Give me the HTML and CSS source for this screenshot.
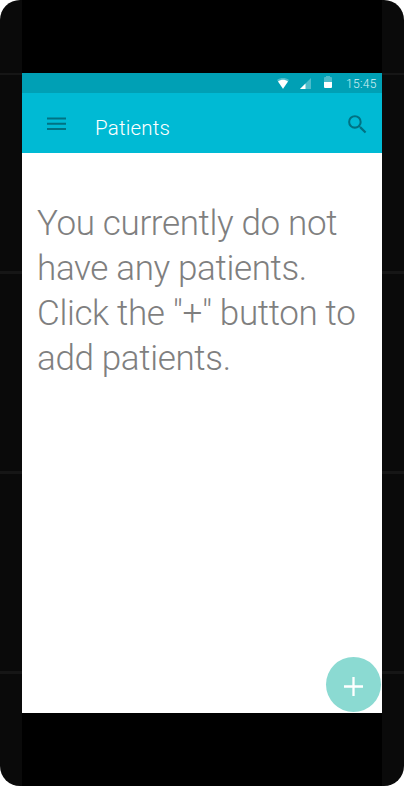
FILE: index.html
```html
<!DOCTYPE html>
<html lang="en">
<head>
<meta charset="utf-8">
<title>Patients</title>
<link rel="stylesheet" href="styles.css">
</head>
<body>
<div class="device">
  <div class="display">
    <header class="status">
      <svg class="wifi" width="12" height="11" viewBox="0 0 12 11"><path class="dim" d="M0 1.900C3.500-.6 8.500-.6 12 1.900L6 11Z"/><path class="lit" d="M1 3.500C4 1.300 8 1.300 11 3.500L6 10.800Z"/></svg>
      <svg class="signal" width="11" height="11" viewBox="0 0 11 11"><path class="dim" d="M0 11L11 0V11Z"/><path class="lit" d="M0 11L5.500 5.500V11Z"/></svg>
      <svg class="battery" width="8" height="12" viewBox="0 0 8 12"><path class="dim" d="M2 0H6V1H7Q8 1 8 2V6H0V2Q0 1 1 1H2Z"/><path class="lit" d="M0 6H8V11Q8 12 7 12H1Q0 12 0 11Z"/></svg>
      <span class="time">15:45</span>
    </header>
    <nav class="toolbar">
      <svg class="menu" width="19" height="14" viewBox="0 0 19 14"><path d="M0 .6H19V2.600H0ZM0 5.800H19V7.800H0ZM0 11H19V13H0Z"/></svg>
      <h1 class="title">Patients</h1>
      <svg class="search" width="25" height="25" viewBox="0 0 24 24"><path d="M15.5 14h-.79l-.28-.27A6.47 6.47 0 0 0 16 9.5 6.5 6.5 0 1 0 9.500 16c1.610 0 3.090-.59 4.230-1.570l.27.28v.79l5 4.990L20.490 19l-4.990-5zm-6 0C7.010 14 5 11.990 5 9.500S7.010 5 9.500 5 14 7.010 14 9.500 11.990 14 9.500 14z"/></svg>
    </nav>
    <main class="content">
      <p class="message">You currently do not<br>have any patients.<br>Click the "+" button to<br>add patients.</p>
      <button class="add" aria-label="Add patient"><svg width="19" height="19" viewBox="0 0 19 19"><path d="M9.500 0V19M0 9.500H19"/></svg></button>
    </main>
  </div>
</div>
</body>
</html>
```
FILE: styles.css
```css
body {
  margin: 0;
  background: #fff;
  font-family: Roboto, sans-serif;
  font-weight: 300;
}
.device {
  box-sizing: border-box;
  width: 404px;
  height: 786px;
  padding: 0 22px;
  border-radius: 20px;
  overflow: hidden;
  background: linear-gradient(#0a0a0a 73px, #161616 73px 75px, #0a0a0a 75px 271px, #161616 271px 274px, #0a0a0a 274px 471px, #161616 471px 474px, #0a0a0a 474px 671px, #161616 671px 674px, #0a0a0a 674px);
}
.display {
  box-sizing: border-box;
  display: flex;
  flex-direction: column;
  height: 786px;
  padding: 73px 0;
  background: #000;
}
.status {
  display: flex;
  align-items: center;
  justify-content: flex-end;
  box-sizing: border-box;
  height: 20px;
  padding-right: 5px;
  background: #00a0b5;
  color: #fff;
}
.dim { fill: #4dbccb; }
.lit { fill: #fff; }
.signal { margin-left: 11px; }
.battery { margin: 0 14px 2px 13px; }
.time {
  width: 31px;
  padding-top: 2px;
  color: #d8f1f4;
  font-size: 12px;
  line-height: 18px;
  letter-spacing: .3px;
  white-space: nowrap;
}
.toolbar {
  display: flex;
  align-items: center;
  box-sizing: border-box;
  height: 60px;
  padding: 0 12px 0 25px;
  background: #00bad4;
}
.menu, .search { fill: #007283; }
.menu { margin-top: 2px; }
.search { margin-top: 3px; }
.title {
  margin: 9px auto 0 29px;
  color: #fff;
  font-size: 20.5px;
  font-weight: 300;
  line-height: 24px;
  letter-spacing: .2px;
}
.content {
  display: flex;
  flex: 1;
  flex-direction: column;
  justify-content: space-between;
  background: #fff;
}
.message {
  margin: 48px 0 0 15px;
  color: #7f7f7f;
  font-size: 35px;
  line-height: 45px;
  letter-spacing: -.35px;
  white-space: nowrap;
}
.add {
  display: flex;
  align-items: center;
  justify-content: center;
  align-self: flex-end;
  width: 55px;
  height: 55px;
  margin: 0 1px 1px 0;
  padding: 3px 0 0;
  border: 0;
  border-radius: 50%;
  background: #8bdad2;
}
.add path { stroke: #fff; stroke-width: 2.3; }
```
